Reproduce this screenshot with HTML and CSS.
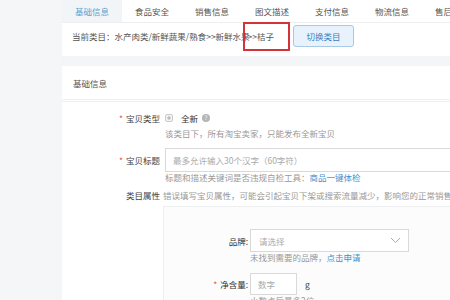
FILE: index.html
```html
<!DOCTYPE html>
<html lang="zh-CN">
<head>
    <meta charset="UTF-8">
    <title>发布宝贝</title>
    <link rel="stylesheet" href="styles.css">
</head>
<body>
    <div class="side"></div>
    <div class="main">
        <div class="tabs">
            <div class="tab active">基础信息</div>
            <div class="tab">食品安全</div>
            <div class="tab">销售信息</div>
            <div class="tab">图文描述</div>
            <div class="tab">支付信息</div>
            <div class="tab">物流信息</div>
            <div class="tab">售后服务</div>
        </div>
        <div class="crumb">
            <span>当前类目：水产肉类/新鲜蔬果/熟食&gt;&gt;新鲜水果</span><span class="mark">&gt;&gt;桔子</span>
            <button type="button" class="switch">切换类目</button>
        </div>
        <div class="band"></div>
        <div class="panel">
            <div class="panel-head">基础信息</div>
            <div class="panel-body">
                <div class="row row-type">
                    <div class="label"><i class="req">*</i>宝贝类型</div>
                    <div class="field">
                        <span class="radio"></span>
                        <span class="opt">全新</span>
                        <span class="help">?</span>
                    </div>
                </div>
                <div class="note note-type">该类目下，所有淘宝卖家，只能发布全新宝贝</div>

                <div class="row row-title">
                    <div class="label"><i class="req">*</i>宝贝标题</div>
                    <div class="field">
                        <div class="input wide">最多允许输入30个汉字（60字符）</div>
                    </div>
                </div>
                <div class="note note-title">标题和描述关键词是否违规自检工具：<a href="#">商品一键体检</a></div>

                <div class="row row-attr">
                    <div class="label">类目属性</div>
                    <div class="field warn">错误填写宝贝属性，可能会引起宝贝下架或搜索流量减少，影响您的正常销售</div>
                </div>

                <div class="attr-box">
                    <div class="arow">
                        <div class="alabel">品牌:</div>
                        <div class="select">
                            <span>请选择</span>
                            <svg width="11" height="7" viewBox="0 0 11 7"><path d="M1 1l4.5 4.5L10 1" fill="none" stroke="#aaa" stroke-width="1"/></svg>
                        </div>
                    </div>
                    <div class="anote">未找到需要的品牌，<a href="#">点击申请</a></div>
                    <div class="arow arow-weight">
                        <div class="alabel"><i class="req">*</i>净含量:</div>
                        <div class="input small">数字</div>
                        <span class="unit">g</span>
                    </div>
                    <div class="anote">小数点后最多2位</div>
                </div>
            </div>
        </div>
    </div>
</body>
</html>
```

FILE: styles.css
```css
body {
    margin: 0;
    display: flex;
    height: 300px;
    overflow: hidden;
    font-family: "Noto Sans CJK SC", "Liberation Sans", sans-serif;
    font-size: 8.5px;
    color: #444;
    background-color: #f5f6f8;
}
.side {
    width: 62px;
    flex-shrink: 0;
}
.main {
    flex: 1;
    background-color: #fff;
    min-width: 0;
}
.tabs {
    display: flex;
    height: 22px;
    border-bottom: 1px solid #eceef1;
    white-space: nowrap;
}
.tab {
    width: 60px;
    flex-shrink: 0;
    line-height: 22px;
    text-align: center;
    color: #555;
}
.tab.active {
    background-color: #f2f5f8;
    color: #5aa3cf;
}
.crumb {
    display: flex;
    align-items: center;
    height: 26px;
    padding: 0 0 7px 10px;
    white-space: nowrap;
    color: #555;
}
.mark {
    display: inline-flex;
    align-items: center;
    height: 25px;
    margin-left: -7px;
    padding: 0 14px 0 3px;
    border: 2px solid #d4333a;
}
.switch {
    width: 61px;
    height: 22px;
    margin-left: 3px;
    padding: 0;
    font-family: inherit;
    font-size: 8.5px;
    color: #3b7fbf;
    background-color: #e7f2fc;
    border: 1px solid #a8c9e6;
    border-radius: 3px;
}
.band {
    height: 10px;
    background-color: #f4f5f7;
}
.panel-head {
    height: 33px;
    line-height: 34px;
    padding-left: 11px;
    color: #555;
    border-bottom: 3px double #eeeff1;
}
.panel-body {
    padding-top: 10px;
}
.row {
    display: flex;
    align-items: center;
}
.label {
    width: 98px;
    flex-shrink: 0;
    text-align: right;
    color: #444;
}
.req {
    font-style: normal;
    color: #e55;
    margin-right: 3px;
}
.field {
    display: flex;
    align-items: center;
    margin-left: 5px;
    flex: 1;
    min-width: 0;
    white-space: nowrap;
}
.row-type {
    height: 12px;
}
.radio {
    width: 6px;
    height: 6px;
    border: 1px solid #ccc;
    border-radius: 2px;
    background: radial-gradient(circle, #bbb 35%, #f2f2f2 40%);
    margin-right: 8px;
}
.opt {
    color: #333;
}
.help {
    display: inline-block;
    width: 8px;
    height: 8px;
    margin-left: 4px;
    border-radius: 50%;
    background-color: #b5b5b5;
    color: #fff;
    font-size: 6px;
    line-height: 8px;
    text-align: center;
}
.note {
    margin-left: 103px;
    color: #999;
    white-space: nowrap;
    line-height: 11px;
}
.note a, .anote a {
    color: #3d8fd0;
    text-decoration: none;
}
.note-type {
    margin-top: 4px;
}
.row-title {
    margin-top: 9px;
}
.input {
    height: 22px;
    line-height: 22px;
    padding-left: 7px;
    border: 1px solid #d9d9d9;
    color: #aaa;
    box-sizing: content-box;
    white-space: nowrap;
}
.input.wide {
    flex: 1;
    margin-right: -20px;
}
.note-title {
    margin-top: 0;
}
.row-attr {
    margin-top: 6px;
    height: 12px;
}
.warn {
    color: #999;
    margin-left: 3px;
}
.attr-box {
    margin: 5px -20px 0 101px;
    padding-top: 22px;
    padding-bottom: 10px;
    background-color: #fcfcfc;
    border: 1px solid #eeeff1;
}
.arow {
    display: flex;
    align-items: center;
}
.alabel {
    width: 84px;
    flex-shrink: 0;
    text-align: right;
    padding-right: 2px;
    color: #333;
}
.select {
    display: flex;
    align-items: center;
    justify-content: space-between;
    width: 142px;
    height: 21px;
    padding: 0 7px 0 8px;
    border: 1px solid #d9d9d9;
    background-color: #fff;
    color: #aaa;
}
.anote {
    margin-left: 86px;
    color: #999;
    line-height: 11px;
}
.arow-weight {
    margin-top: 10px;
}
.input.small {
    width: 38px;
    height: 20px;
    line-height: 20px;
    background-color: #fff;
}
.unit {
    margin-left: 8px;
    color: #444;
}
```
